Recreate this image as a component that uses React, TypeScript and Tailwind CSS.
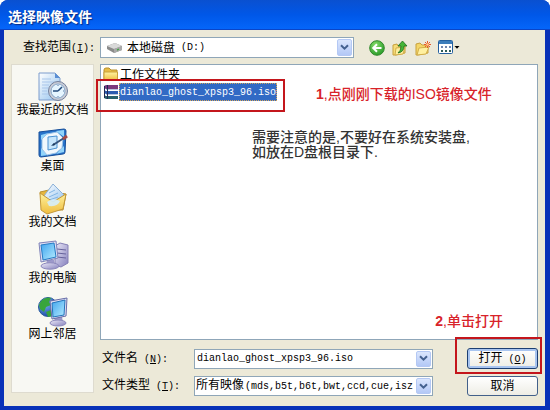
import { useState } from "react";
import type { ReactNode } from "react";

const FILE_NAME = "dianlao_ghost_xpsp3_96.iso";

function Mono({ children }: { children: ReactNode }) {
  return <span className="font-['Liberation_Mono','Noto_Sans_CJK_SC',monospace] text-[10px]">{children}</span>;
}

function Chevron() {
  return (
    <span className="flex h-full w-[15px] shrink-0 items-center justify-center rounded-[2px] border border-[#b4c8f4] bg-linear-to-b from-[#dbe6fd] to-[#b3c8f6]">
      <svg width="9" height="7" viewBox="0 0 9 7" fill="none" stroke="#44618f" strokeWidth="2">
        <path d="M1 1.2 4.5 4.7 8 1.2" />
      </svg>
    </span>
  );
}

function Combo({ id, value, className, children }: { id: string; value: string; className: string; children: ReactNode }) {
  return (
    <div className={`relative flex items-center border border-[#8fa6b8] bg-white p-px ${className}`}>
      <div className="flex min-w-0 flex-1 items-center overflow-hidden whitespace-pre">{children}</div>
      <Chevron />
      <select id={id} defaultValue={value} className="absolute inset-0 w-full cursor-pointer opacity-0">
        <option value={value}>{value}</option>
      </select>
    </div>
  );
}

function Defs() {
  return (
    <svg width="0" height="0" className="absolute" aria-hidden="true">
      <defs>
        <linearGradient id="paper" x1="0" y1="0" x2="1" y2="1">
          <stop offset="0" stopColor="#fff" />
          <stop offset="1" stopColor="#8fc0ee" />
        </linearGradient>
        <linearGradient id="screen" x1="0" y1="0" x2="1" y2="1">
          <stop offset="0" stopColor="#3fa4ee" />
          <stop offset="1" stopColor="#b5ecff" />
        </linearGradient>
        <linearGradient id="case" x1="0" y1="0" x2="1" y2="1">
          <stop offset="0" stopColor="#eceaf8" />
          <stop offset="1" stopColor="#8580bd" />
        </linearGradient>
        <linearGradient id="folder" x1="0" y1="0" x2="0" y2="1">
          <stop offset="0" stopColor="#fff3a0" />
          <stop offset="1" stopColor="#efbd3e" />
        </linearGradient>
        <radialGradient id="globe" cx="0.35" cy="0.3" r="0.8">
          <stop offset="0" stopColor="#7cb8f4" />
          <stop offset="1" stopColor="#123f9e" />
        </radialGradient>
        <radialGradient id="green" cx="0.4" cy="0.3" r="0.8">
          <stop offset="0" stopColor="#86dc6a" />
          <stop offset="1" stopColor="#1f9422" />
        </radialGradient>
      </defs>
    </svg>
  );
}

function RecentIcon() {
  return (
    <svg width="32" height="32" viewBox="0 0 32 32">
      <path d="M2 2h16l5 5v22H2z" fill="url(#paper)" stroke="#7c9ccc" />
      <path d="M18 2v5h5z" fill="#5b8fd4" />
      <path d="M5 8h9M5 11h12M5 14h7M5 17h6M5 20h5M5 23h6" stroke="#a9c6ea" />
      <circle cx="21" cy="20" r="9.5" fill="#c9ccd6" stroke="#73809c" />
      <circle cx="21" cy="20" r="7" fill="#e5f5ff" stroke="#86a5c8" />
      <path d="M21 20l4-4M21 20h-5" stroke="#244b7c" strokeWidth="1.6" />
      <path d="M21 14v1M21 25v1M27 20h-1" stroke="#5d7fa8" />
    </svg>
  );
}

function DesktopIcon() {
  return (
    <svg width="32" height="32" viewBox="0 0 32 32">
      <path d="M2 5 27 2q2 0 2 2l-1 21q0 2-2 2L4 30q-2 0-2-2z" fill="#2874cb" stroke="#164e99" />
      <path d="M4 8l7-2-7 7zM19 4l8-1v7zM4 21l7 7-7 1zM27 19v6l-8 2z" fill="#91d4fa" />
      <path d="M10 7l10-2 6 6-1 10-6 5-9 2-5-6V12z" fill="#f1f8fd" stroke="#9cc4e8" />
      <path d="M11 10l9-1v12l-9 2z" fill="#c7e6fc" stroke="#4b91d1" />
      <path d="M16 18 27 11" stroke="#36547d" strokeWidth="2" />
      <path d="M26 12l4-3" stroke="#a34a46" strokeWidth="3" />
      <path d="M14 19l3-3 1 2z" fill="#17395f" />
    </svg>
  );
}

function DocumentsIcon() {
  return (
    <svg width="32" height="32" viewBox="0 0 32 32">
      <path d="M3 9l9-2 3 2 14 2-3 16H6z" fill="#e6b63d" stroke="#b98f2d" />
      <path d="M7 13 16 1l11 11-3 12H8z" fill="url(#paper)" stroke="#8bb1d8" />
      <path d="M12 10l6-3M12 14l9-4M12 17l9-3" stroke="#83b6e5" />
      <path d="M3 10l13 9 13-8-3 15-16 5-6-4z" fill="url(#folder)" stroke="#c3983a" />
      <path d="M10 19q6-5 13-1-2 6-11 5z" fill="#d5eefa" opacity=".9" />
    </svg>
  );
}

function ComputerIcon() {
  return (
    <svg width="32" height="32" viewBox="0 0 32 32">
      <path d="M18 7l5-3 8 2v18l-7 4-6-2z" fill="url(#case)" stroke="#8580b5" />
      <path d="M20 10l9 1M20 14l9 1M20 18l9 1" stroke="#67639c" />
      <path d="M10 21h7l1 5H9z" fill="#9c98ca" />
      <ellipse cx="13" cy="27" rx="9" ry="3.2" fill="url(#case)" stroke="#8c88bc" />
      <path d="M2 4l17-2 2 17-17 4z" fill="#dedcf2" stroke="#7f83b8" />
      <path d="M4 6l13-2 2 14-13 3z" fill="url(#screen)" stroke="#257bc4" />
    </svg>
  );
}

function NetworkIcon() {
  return (
    <svg width="32" height="32" viewBox="0 0 32 32">
      <circle cx="11" cy="12" r="9.5" fill="url(#globe)" stroke="#285a9f" />
      <path d="M4 6q5-5 10-3l-2 4 2 3-5 2-2 5-4-3-1-4zM9 17l5-2 1 6-4 1z" fill="#38a53c" />
      <path d="M18 22h7l1 5h-9z" fill="#9b98ca" />
      <ellipse cx="21" cy="28" rx="8" ry="3" fill="url(#case)" stroke="#8c88bc" />
      <path d="M13 6l17-3-1 18-14 3z" fill="#dedcf2" stroke="#676da7" />
      <path d="M15 8l13-3-1 15-11 2z" fill="url(#screen)" stroke="#2274bb" />
    </svg>
  );
}

function DriveIcon() {
  return (
    <svg width="17" height="12" viewBox="0 0 17 12" className="mx-1 shrink-0">
      <path d="M1 4 9 1l7 3v4l-8 3-7-4z" fill="#8b8b8b" />
      <path d="M1 4 9 1l7 3-8 3z" fill="#d9d9d9" />
      <path d="M8 7l8-3v4l-8 3z" fill="#a9a9a9" />
      <path d="M11 8l2-.8" stroke="#49a349" strokeWidth="1.4" />
    </svg>
  );
}

function FolderIcon() {
  return (
    <svg width="16" height="15" viewBox="0 0 16 15" className="shrink-0">
      <path d="M1 3q0-2 2-2h3l2 2h6v10H1z" fill="#e8bd45" stroke="#b78e2c" />
      <path d="M1 5h13.500v7.500q0 1-1 1H2q-1 0-1-1z" fill="url(#folder)" stroke="#caa03a" />
    </svg>
  );
}

// stack of three books, spines on the left
function ArchiveIcon() {
  return (
    <svg width="16" height="16" viewBox="0 0 16 16" className="shrink-0">
      <path d="M1 2l2-1h12v4H3L1 4z" fill="#7a3a7e" />
      <path d="M1 6l2 1h12v3H3L1 9z" fill="#2b5bb0" />
      <path d="M1 11l2 1h12v3H3l-2-1z" fill="#27606c" />
      <path d="M3 5.500h12M3 10.500h12" stroke="#b9c6dc" />
      <path d="M1.500 2v12M4.500 1v14" stroke="#202a56" />
    </svg>
  );
}

function BackIcon() {
  return (
    <svg width="16" height="16" viewBox="0 0 16 16">
      <circle cx="8" cy="8" r="7.300" fill="url(#green)" stroke="#32882c" />
      <path d="M12.500 8H4.500M8 4.200 4.200 8 8 11.800" fill="none" stroke="#fff" strokeWidth="2" />
    </svg>
  );
}

function UpIcon() {
  return (
    <svg width="16" height="16" viewBox="0 0 16 16">
      <path d="M1 5l4-1 1 2 7-1v8l-9 2H1z" fill="#f6dc78" stroke="#c7a03c" />
      <path d="M4 8l9-1-2 7-8 1z" fill="#fff0a0" stroke="#d2ae4a" />
      <path d="M6 13q3-2 3-7H6l4.500-5L15 6h-3q0 6-6 7z" fill="#45b436" stroke="#1d6c1d" strokeWidth=".8" />
    </svg>
  );
}

function NewFolderIcon() {
  return (
    <svg width="16" height="16" viewBox="0 0 16 16">
      <path d="M1 4l4-1 2 2h6v8l-10 2H1z" fill="#f4d668" stroke="#c7a03c" />
      <path d="M4 8l10-1-3 7-9 1z" fill="#fff0a0" stroke="#d2ae4a" />
      <path d="M12.500 1v7M9 4.500h7M10 2l5 5M15 2l-5 5" stroke="#e8552c" strokeWidth="1" />
      <circle cx="12.500" cy="4.500" r="1.300" fill="#ffd28a" />
    </svg>
  );
}

function ViewIcon() {
  return (
    <svg width="22" height="15" viewBox="0 0 22 15">
      <rect x=".5" y=".5" width="14" height="13" rx="1" fill="#fff" stroke="#24609f" />
      <path d="M1 1h13v3H1z" fill="#3c7dbb" />
      <path d="M3 7h2M7 7h2M11 7h2" stroke="#7287ae" strokeWidth="2" />
      <path d="M3 11h2M7 11h2M11 11h2" stroke="#2d5c57" strokeWidth="2" />
      <path d="M16.500 6h5L19 8.800z" fill="#000" />
    </svg>
  );
}

const tools = [
  { label: "后退", icon: <BackIcon /> },
  { label: "向上一级", icon: <UpIcon /> },
  { label: "新建文件夹", icon: <NewFolderIcon /> },
  { label: "查看", icon: <ViewIcon /> },
];

const places = [
  { label: "我最近的文档", icon: <RecentIcon /> },
  { label: "桌面", icon: <DesktopIcon /> },
  { label: "我的文档", icon: <DocumentsIcon /> },
  { label: "我的电脑", icon: <ComputerIcon /> },
  { label: "网上邻居", icon: <NetworkIcon /> },
];

export default function App() {
  const [fileName, setFileName] = useState(FILE_NAME);

  return (
    <div className="bg-white">
      <Defs />
      <main className="flex min-h-screen flex-col overflow-hidden rounded-t-lg bg-[#0831b8] pb-1 font-['Liberation_Sans','Noto_Sans_CJK_SC',sans-serif] text-[12px] leading-4 text-black">
        <header className="flex h-[30px] items-center border-b border-[#0a45c8] bg-linear-to-b from-[#0a50d0] via-[#0057e8] to-[#0566fa] px-2 pt-1">
          <h1 className="text-[14px] font-bold text-white [text-shadow:1px_1px_1px_#0a2a80]">选择映像文件</h1>
        </header>

        <div className="mr-[5px] ml-1 grid flex-1 grid-cols-[83px_minmax(0,1fr)] grid-rows-[auto_1fr] gap-x-[6px] gap-y-[6px] bg-[#ece9d8] px-[7px] pt-[7px] pb-[10px]">
          <label htmlFor="look-in" className="self-center pl-3 whitespace-nowrap">
            查找范围<Mono>(<u>I</u>):</Mono>
          </label>
          <div className="flex items-center">
            <Combo id="look-in" value="本地磁盘 (D:)" className="h-[21px] w-[58%]">
              <DriveIcon />
              本地磁盘<Mono> (D:)</Mono>
            </Combo>
            <div className="ml-[15px] flex items-center gap-[7px]">
              {tools.map((t) => (
                <button key={t.label} type="button" aria-label={t.label}>
                  {t.icon}
                </button>
              ))}
            </div>
          </div>

          <nav className="mb-[3px] flex flex-col border border-[#dedbcf] bg-[#f8f8f3] pt-[6px]">
            {places.map((p) => (
              <button key={p.label} type="button" className="flex h-14 flex-col items-center whitespace-nowrap">
                {p.icon}
                <span className="leading-[14px]">{p.label}</span>
              </button>
            ))}
          </nav>

          <div className="flex flex-col">
            <div className="relative flex-1 border border-[#8fa6b8] bg-white pt-px pl-[2px]">
              <ul>
                <li className="flex h-[17px] items-center gap-px">
                  <FolderIcon />
                  <span>工作文件夹</span>
                </li>
                <li className="flex h-[17px] items-center">
                  <ArchiveIcon />
                  <span className="border border-dotted border-[#d6a55c] bg-[#316ac5] leading-[14px] text-white">
                    <Mono>{FILE_NAME}</Mono>
                  </span>
                </li>
              </ul>

              {/* step 1 marker */}
              <div className="absolute top-[14px] -left-[5px] h-[33px] w-[189px] border-2 border-[#c4161c]" />
              <p className="absolute top-[21px] left-[215px] text-[14px] font-medium whitespace-nowrap text-[#d8232a]">
                <b>1</b>,点刚刚下载的ISO镜像文件
              </p>
              <p className="absolute top-[65px] left-[151px] text-[14px] leading-[15px] font-medium whitespace-nowrap text-[#333]">
                需要注意的是,不要好在系统安装盘,
                <br />
                如放在D盘根目录下.
              </p>
              <p className="absolute right-[34px] bottom-[10px] text-[14px] font-medium whitespace-nowrap text-[#d8232a]">
                <b>2</b>,单击打开
              </p>
            </div>

            <form
              className="mt-2 grid grid-cols-[94px_minmax(0,1fr)_71px] items-center gap-y-[7px]"
              onSubmit={(e) => e.preventDefault()}
            >
              <label htmlFor="file-name" className="pl-[2px]">
                文件名<Mono> (<u>N</u>):</Mono>
              </label>
              <div className="mr-[34px] flex h-5 items-center border border-[#8fa6b8] bg-white p-px">
                <input
                  id="file-name"
                  value={fileName}
                  onChange={(e) => setFileName(e.target.value)}
                  className="min-w-0 flex-1 px-px font-['Liberation_Mono','Noto_Sans_CJK_SC',monospace] text-[10px] outline-none"
                />
                <Chevron />
              </div>
              <div className="relative">
                <button
                  type="submit"
                  className="block h-[21px] w-full rounded-[3px] border border-[#1c3f73] bg-linear-to-b from-white to-[#eeede5] shadow-[inset_0_0_0_2px_#a9c5f0]"
                >
                  打开<Mono> (<u>O</u>)</Mono>
                </button>
                {/* step 2 marker */}
                <div className="pointer-events-none absolute -top-[11px] -right-1 -bottom-[5px] -left-3 border-2 border-[#c4161c]" />
              </div>

              <label htmlFor="file-type" className="pl-[2px]">
                文件类型<Mono> (<u>T</u>):</Mono>
              </label>
              <Combo id="file-type" value="所有映像 (mds,b5t,b6t,bwt,ccd,cue,isz)" className="mr-[34px] h-5">
                <span className="flex items-baseline gap-px">
                  所有映像<Mono>(mds,b5t,b6t,bwt,ccd,cue,isz</Mono>
                </span>
              </Combo>
              <button
                type="button"
                className="h-5 rounded-[3px] border border-[#42608a] bg-linear-to-b from-white to-[#eeede5]"
              >
                取消
              </button>
            </form>
          </div>
        </div>
      </main>
    </div>
  );
}
